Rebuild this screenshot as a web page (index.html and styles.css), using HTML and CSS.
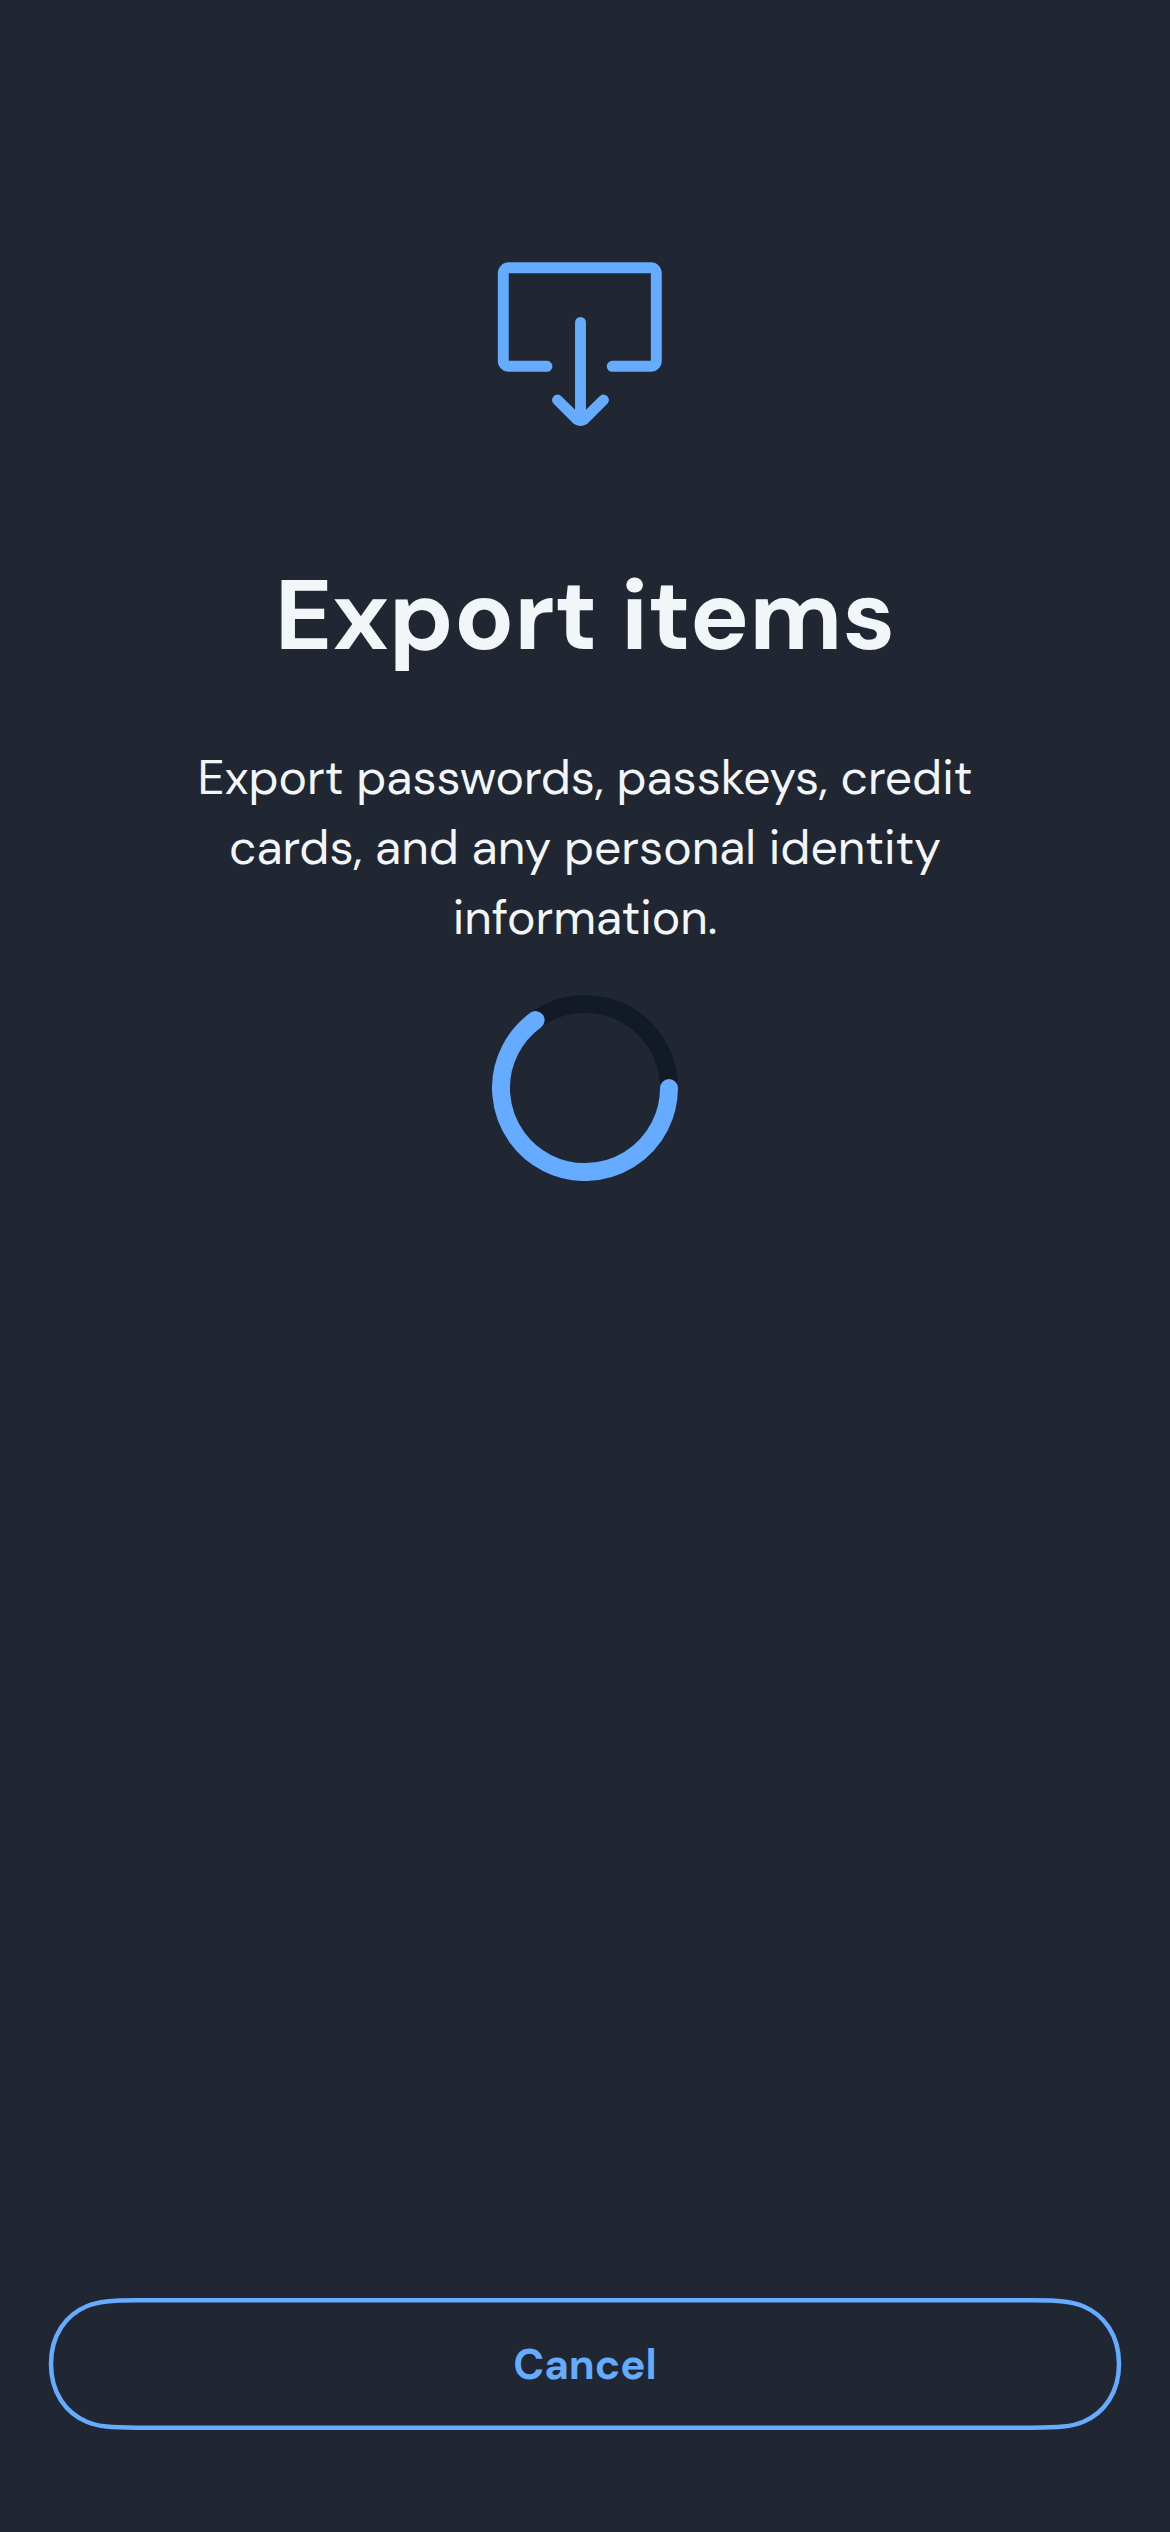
FILE: index.html
```html
<!DOCTYPE html>
<html lang="en">
<head>
<meta charset="utf-8">
<title>Export items</title>
<link rel="stylesheet" href="styles.css">
</head>
<body>
<main class="screen">
  <svg class="hero-icon" viewBox="0 0 200 200" aria-hidden="true">
    <path d="M67 126.3H28.7A5.4 5.4 0 0 1 23.3 120.9V33.2A5.4 5.4 0 0 1 28.7 27.8H170.9A5.4 5.4 0 0 1 176.3 33.2V120.9A5.4 5.4 0 0 1 170.9 126.3H132.2"/>
    <path d="M100.5 82.4V178M77.5 160L97.3 179.6Q100.5 181.5 103.7 179.6L123.5 160"/>
  </svg>
  <h1 class="title">Export items</h1>
  <p class="description"><span class="line">Export passwords, passkeys, credit</span> <span class="line">cards, and any personal identity</span> <span class="line">information.</span></p>
  <svg class="spinner" viewBox="0 0 186 186" role="img" aria-label="Loading">
    <circle class="track" cx="93" cy="93" r="84"/>
    <path class="arc" d="M177 93A84 84 0 1 1 43.6 25.1"/>
  </svg>
  <button class="cancel" type="button">
    <svg class="outline" viewBox="0 0 1074 132" aria-hidden="true">
      <path d="M88.7 2.3H985.3C1010.3 2.3 1023.7 3.3 1035.3 8.3C1056 17 1071 37 1071 66C1071 95 1056 115 1035.3 123.7C1023.7 128.7 1010.3 129.7 985.3 129.7H88.7C63.7 129.7 50.3 128.7 38.7 123.7C18 115 3 95 3 66C3 37 18 17 38.7 8.3C50.3 3.3 63.7 2.3 88.7 2.3Z"/>
    </svg>
    <span class="cancel-label">Cancel</span>
  </button>
</main>
</body>
</html>
```
FILE: styles.css
```css
* { box-sizing: border-box; }
body {
  margin: 0;
  background: #202733;
  color: #f3f6f9;
  font-family: "DM Sans", Lato, sans-serif;
}
.screen {
  display: flex;
  flex-direction: column;
  align-items: center;
  width: 1170px;
  height: 2532px;
  padding: 240px 48px 102px;
}
.hero-icon {
  flex: none;
  width: 200px;
  height: 200px;
  margin-right: 10px;
  fill: none;
  stroke: #65abff;
  stroke-width: 10.9;
  stroke-linecap: round;
}
.title {
  margin: 111px 0 0;
  font-size: 99px;
  font-weight: 700;
  line-height: 130px;
  white-space: nowrap;
}
.description {
  margin: 62px 0 0;
  font-size: 48px;
  line-height: 70px;
  text-align: center;
}
.line {
  display: block;
  white-space: nowrap;
}
.spinner {
  flex: none;
  width: 186px;
  height: 186px;
  margin-top: 42px;
  fill: none;
  stroke-width: 18;
}
.track { stroke: #121a27; }
.arc { stroke: #65abff; stroke-linecap: round; }
.cancel {
  position: relative;
  display: flex;
  flex: none;
  align-items: center;
  justify-content: center;
  width: 1074px;
  height: 132px;
  margin-top: auto;
  padding: 2px 0 0;
  border: 0;
  background: none;
  color: #65abff;
  font: 700 42px/60px "DM Sans", Lato, sans-serif;
}
.outline {
  position: absolute;
  inset: 0;
  width: 1074px;
  height: 132px;
  fill: none;
  stroke: #65abff;
  stroke-width: 4.5;
}
```
